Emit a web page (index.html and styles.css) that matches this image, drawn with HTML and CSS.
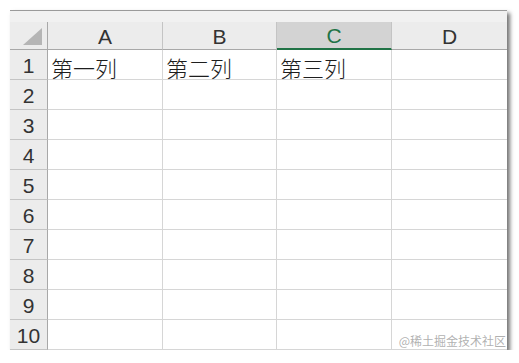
FILE: index.html
```html
<!DOCTYPE html>
<html lang="zh-CN">
<head>
    <meta charset="UTF-8" />
    <title>Sheet</title>
    <link rel="stylesheet" href="styles.css">
</head>
<body>
    <div class="sheet">
        <div class="topband"></div>
        <div class="grid">
            <div class="corner">
                <svg width="20" height="18" viewBox="0 0 20 18"><polygon points="19,0 19,17 0,17" fill="#b5b5b5"/></svg>
            </div>
            <div class="colhead">A</div>
            <div class="colhead">B</div>
            <div class="colhead selected">C</div>
            <div class="colhead last">D</div>

            <div class="rowhead">1</div>
            <div class="cell">第一列</div>
            <div class="cell">第二列</div>
            <div class="cell">第三列</div>
            <div class="cell last"></div>

            <div class="rowhead">2</div><div class="cell"></div><div class="cell"></div><div class="cell"></div><div class="cell last"></div>
            <div class="rowhead">3</div><div class="cell"></div><div class="cell"></div><div class="cell"></div><div class="cell last"></div>
            <div class="rowhead">4</div><div class="cell"></div><div class="cell"></div><div class="cell"></div><div class="cell last"></div>
            <div class="rowhead">5</div><div class="cell"></div><div class="cell"></div><div class="cell"></div><div class="cell last"></div>
            <div class="rowhead">6</div><div class="cell"></div><div class="cell"></div><div class="cell"></div><div class="cell last"></div>
            <div class="rowhead">7</div><div class="cell"></div><div class="cell"></div><div class="cell"></div><div class="cell last"></div>
            <div class="rowhead">8</div><div class="cell"></div><div class="cell"></div><div class="cell"></div><div class="cell last"></div>
            <div class="rowhead">9</div><div class="cell"></div><div class="cell"></div><div class="cell"></div><div class="cell last"></div>
            <div class="rowhead">10</div><div class="cell"></div><div class="cell"></div><div class="cell"></div><div class="cell last"></div>
        </div>
        <span class="watermark">@稀土掘金技术社区</span>
    </div>
</body>
</html>
```

FILE: styles.css
```css
body {
    margin: 0;
    background: #fff;
    font-family: "Liberation Sans", Arial, sans-serif;
}
.sheet {
    position: relative;
    margin: 10px 0 0 10px;
    width: 497px;
    background: #fff;
    box-shadow: 3px 3px 4px rgba(0, 0, 0, 0.55);
}
.topband {
    height: 11px;
    background: #f1f1f1;
    border-top: 1px solid #9a9a9a;
}
.grid {
    display: grid;
    grid-template-columns: 38px 115px 114px 115px 115px;
    grid-template-rows: 28px repeat(10, 30px);
}
.corner {
    background: #ececec;
    border-right: 1px solid #a8a8a8;
    border-bottom: 1px solid #a8a8a8;
    display: flex;
    justify-content: flex-end;
    align-items: flex-end;
    padding: 0 4px 3px 0;
}
.colhead {
    background: #ececec;
    border-right: 1px solid #c4c4c4;
    border-bottom: 1px solid #a8a8a8;
    display: flex;
    justify-content: center;
    align-items: flex-end;
    padding-bottom: 0;
    font-size: 21px;
    color: #333;
}
.colhead.selected {
    background: #d3d3d3;
    color: #217346;
    border-bottom: 2px solid #217346;
}
.colhead.last, .cell.last { border-right: none; }
.rowhead {
    background: #ececec;
    border-right: 1px solid #a8a8a8;
    border-bottom: 1px solid #c4c4c4;
    display: flex;
    justify-content: center;
    align-items: flex-end;
    padding-bottom: 1px;
    font-size: 21px;
    color: #333;
}
.cell {
    border-right: 1px solid #d6d6d6;
    border-bottom: 1px solid #d6d6d6;
    display: flex;
    align-items: flex-end;
    padding: 0 0 1px 3px;
    font-family: "Noto Sans CJK SC", sans-serif;
    font-weight: 300;
    font-size: 22px;
    line-height: 1;
    color: #1e1e1e;
}
.grid > div { box-sizing: border-box; }
.watermark {
    position: absolute;
    right: 1px;
    bottom: 1px;
    font-family: "Noto Sans CJK SC", sans-serif;
    font-size: 12px;
    color: rgba(150, 150, 150, 0.75);
}
```
